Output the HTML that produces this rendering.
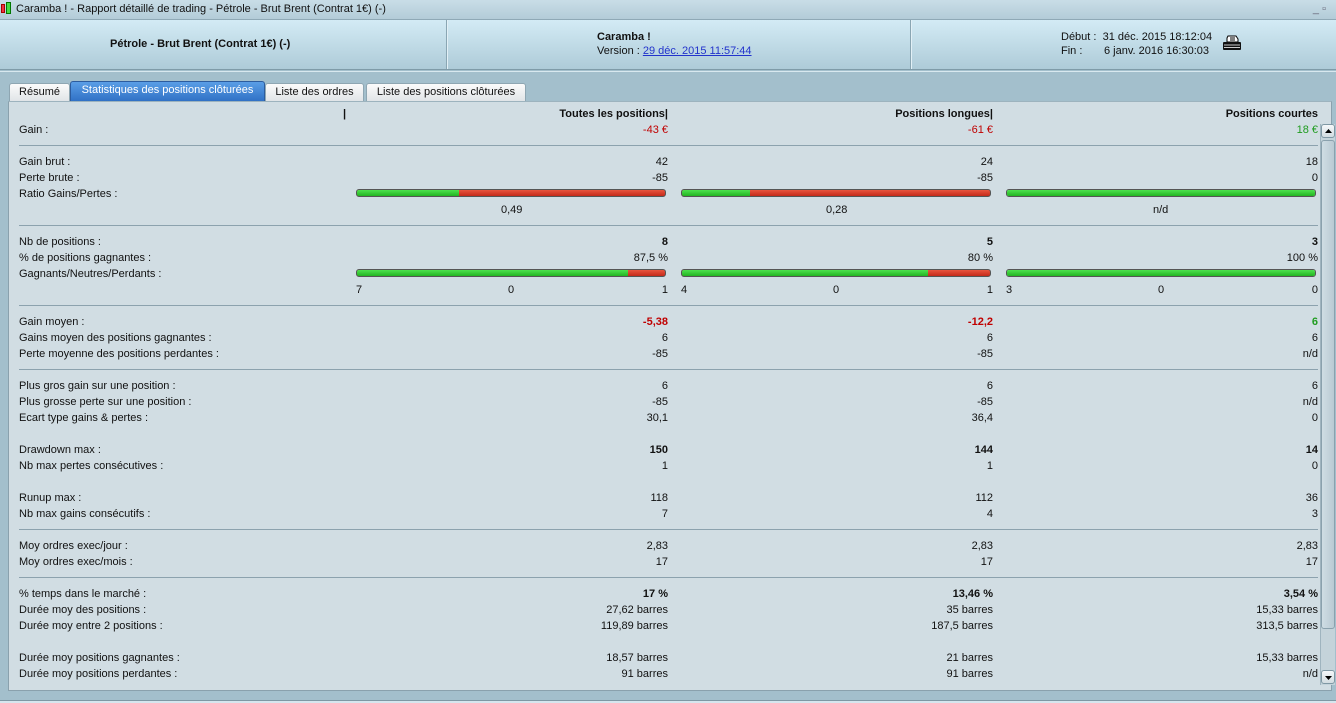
<!DOCTYPE html>
<html><head><meta charset="utf-8"><style>
*{margin:0;padding:0;box-sizing:border-box}
html{overflow:hidden;background:#a3bfcc}
body{width:1336px;height:703px;overflow:hidden;background:#a3bfcc;font-family:"Liberation Sans",Arial,sans-serif;font-size:11px;color:#111;position:relative}
.title{position:absolute;left:0;top:0;width:1336px;height:20px;background:linear-gradient(#c9dde7,#b3ccd8);border-bottom:1px solid #8fa9b6;font-size:11px;line-height:18px;padding-left:16px;color:#111}
.hdr{position:absolute;left:0;top:20px;width:1336px;height:50px;background:linear-gradient(#d3ebf5,#aecbd8);border-bottom:1px solid #7f9ba8}
.vs{position:absolute;top:0;width:1px;height:49px;background:#8aa6b3;box-shadow:1px 0 0 #e2f0f6}
.band{position:absolute;left:0;top:71px;width:1336px;height:1px;background:#d8e8ef}
.tab{position:absolute;top:83px;height:19px;border:1px solid #8ea6b2;border-bottom:none;border-radius:3px 3px 0 0;background:linear-gradient(#fbfbfb,#dfe3e6);line-height:17px;text-align:center;font-size:11px}
.tab.act{top:81px;height:21px;background:linear-gradient(#5a9ee6,#2e6fc4);color:#fff;border-color:#2c5c9e}
.panel{position:absolute;left:8px;top:101px;width:1324px;height:590px;background:#d1dde3;border:1px solid #8aa1ad;border-top-color:#9db3be}
.r{position:absolute;left:0;width:1336px;height:16px;line-height:16px;top:0}
.l{position:absolute;left:19px}
.v{position:absolute;text-align:right;width:200px}
.c1{left:468px}.c2{left:793px}.c3{left:1118px}
.b{font-weight:bold}
.red{color:#c00000}.grn{color:#1f9c1f}
.sep{position:absolute;left:19px;width:1299px;height:1px;background:#8ca2ae}
.bar{position:absolute;height:8px;border:1px solid #555;border-radius:3px;overflow:hidden;background:#d23a26;width:310px}
.bar i{display:block;height:100%;background:linear-gradient(#4ee24e,#22b422)}
.bar.rd{background:linear-gradient(#e8553e,#c42a1a)}
.sb{position:absolute;left:1320px;top:124px;width:15px;height:561px;background:#c4d3da;border-left:1px solid #9fb4bf;overflow:hidden}
.sbtn{position:absolute;left:0;width:14px;height:14px;border:1px solid #7f98a4;border-radius:3px;background:linear-gradient(#f5f8fa,#d2dce1)}
.thumb{position:absolute;left:0;top:16px;width:14px;height:489px;border:1px solid #8aa1ad;border-radius:3px;background:linear-gradient(90deg,#cfdde4,#b9cad3)}
</style></head><body>
<div class="title"><span style="position:absolute;left:1px;top:4px;width:4px;height:9px;background:#e34;border:1px solid #a00"></span><span style="position:absolute;left:6px;top:2px;width:5px;height:12px;background:#4d4;border:1px solid #070"></span>Caramba ! - Rapport détaillé de trading - Pétrole - Brut Brent (Contrat 1€) (-)<span style="position:absolute;right:10px;top:0;color:#667">_ ▫</span></div>
<div class="hdr">
<div class="vs" style="left:446px"></div><div class="vs" style="left:910px"></div>
<div class="b" style="position:absolute;left:110px;top:18px">Pétrole - Brut Brent (Contrat 1€) (-)</div>
<div class="b" style="position:absolute;left:597px;top:11px">Caramba !</div>
<div style="position:absolute;left:597px;top:25px">Version : <span style="color:#2233cc;text-decoration:underline">29 déc. 2015 11:57:44</span></div>
<div style="position:absolute;left:1061px;top:11px">Début :&nbsp; 31 déc. 2015 18:12:04</div>
<div style="position:absolute;left:1061px;top:25px">Fin :<span style="position:absolute;left:43px;white-space:nowrap">6 janv. 2016 16:30:03</span></div>
<svg style="position:absolute;left:1222px;top:15px" width="20" height="18" viewBox="0 0 20 18"><path d="M6 1h8l2 3v3H5V3z" fill="#fff" stroke="#000"/><path d="M2 7h16a1 1 0 0 1 1 1v6a1 1 0 0 1-1 1H2a1 1 0 0 1-1-1V8a1 1 0 0 1 1-1z" fill="#111"/><path d="M2 10h16M2 12.5h16" stroke="#ccc"/><path d="M8 3h5M8 5h5" stroke="#000"/></svg>
</div>
<div class="band"></div>
<div class="tab" style="left:9px;width:61px">Résumé</div>
<div class="tab act" style="left:70px;width:195px">Statistiques des positions clôturées</div>
<div class="tab" style="left:265px;width:99px">Liste des ordres</div>
<div class="tab" style="left:366px;width:160px">Liste des positions clôturées</div>
<div class="panel"></div>

<div class="r b" style="top:106px"><span style="position:absolute;left:343px">|</span><span class="v c1">Toutes les positions|</span><span class="v c2">Positions longues|</span><span class="v c3">Positions courtes</span></div>
<div class="r" style="top:122px"><span class="l">Gain :</span><span class="v c1 red">-43 €</span><span class="v c2 red">-61 €</span><span class="v c3 grn">18 €</span></div>
<div class="sep" style="top:145px"></div>
<div class="r" style="top:154px"><span class="l">Gain brut :</span><span class="v c1">42</span><span class="v c2">24</span><span class="v c3">18</span></div>
<div class="r" style="top:170px"><span class="l">Perte brute :</span><span class="v c1">-85</span><span class="v c2">-85</span><span class="v c3">0</span></div>
<div class="r" style="top:186px"><span class="l">Ratio Gains/Pertes :</span></div>
<div class="bar rd" style="left:356px;top:189px"><i style="width:33%"></i></div>
<div class="bar rd" style="left:681px;top:189px"><i style="width:22%"></i></div>
<div class="bar" style="left:1006px;top:189px"><i style="width:100%"></i></div>
<div class="r" style="top:202px"><span style="position:absolute;left:501px">0,49</span><span style="position:absolute;left:826px">0,28</span><span style="position:absolute;left:1153px">n/d</span></div>
<div class="sep" style="top:225px"></div>
<div class="r" style="top:234px"><span class="l">Nb de positions :</span><span class="v c1 b">8</span><span class="v c2 b">5</span><span class="v c3 b">3</span></div>
<div class="r" style="top:250px"><span class="l">% de positions gagnantes :</span><span class="v c1">87,5 %</span><span class="v c2">80 %</span><span class="v c3">100 %</span></div>
<div class="r" style="top:266px"><span class="l">Gagnants/Neutres/Perdants :</span></div>
<div class="bar rd" style="left:356px;top:269px"><i style="width:88%"></i></div>
<div class="bar rd" style="left:681px;top:269px"><i style="width:80%"></i></div>
<div class="bar" style="left:1006px;top:269px"><i style="width:100%"></i></div>
<div class="r" style="top:282px"><span style="position:absolute;left:356px">7</span><span style="position:absolute;left:508px">0</span><span class="v c1">1</span><span style="position:absolute;left:681px">4</span><span style="position:absolute;left:833px">0</span><span class="v c2">1</span><span style="position:absolute;left:1006px">3</span><span style="position:absolute;left:1158px">0</span><span class="v c3">0</span></div>
<div class="sep" style="top:305px"></div>
<div class="r" style="top:314px"><span class="l">Gain moyen :</span><span class="v c1 red b">-5,38</span><span class="v c2 red b">-12,2</span><span class="v c3 grn b">6</span></div>
<div class="r" style="top:330px"><span class="l">Gains moyen des positions gagnantes :</span><span class="v c1">6</span><span class="v c2">6</span><span class="v c3">6</span></div>
<div class="r" style="top:346px"><span class="l">Perte moyenne des positions perdantes :</span><span class="v c1">-85</span><span class="v c2">-85</span><span class="v c3">n/d</span></div>
<div class="sep" style="top:369px"></div>
<div class="r" style="top:378px"><span class="l">Plus gros gain sur une position :</span><span class="v c1">6</span><span class="v c2">6</span><span class="v c3">6</span></div>
<div class="r" style="top:394px"><span class="l">Plus grosse perte sur une position :</span><span class="v c1">-85</span><span class="v c2">-85</span><span class="v c3">n/d</span></div>
<div class="r" style="top:410px"><span class="l">Ecart type gains &amp; pertes :</span><span class="v c1">30,1</span><span class="v c2">36,4</span><span class="v c3">0</span></div>
<div class="r" style="top:442px"><span class="l">Drawdown max :</span><span class="v c1 b">150</span><span class="v c2 b">144</span><span class="v c3 b">14</span></div>
<div class="r" style="top:458px"><span class="l">Nb max pertes consécutives :</span><span class="v c1">1</span><span class="v c2">1</span><span class="v c3">0</span></div>
<div class="r" style="top:490px"><span class="l">Runup max :</span><span class="v c1">118</span><span class="v c2">112</span><span class="v c3">36</span></div>
<div class="r" style="top:506px"><span class="l">Nb max gains consécutifs :</span><span class="v c1">7</span><span class="v c2">4</span><span class="v c3">3</span></div>
<div class="sep" style="top:529px"></div>
<div class="r" style="top:538px"><span class="l">Moy ordres exec/jour :</span><span class="v c1">2,83</span><span class="v c2">2,83</span><span class="v c3">2,83</span></div>
<div class="r" style="top:554px"><span class="l">Moy ordres exec/mois :</span><span class="v c1">17</span><span class="v c2">17</span><span class="v c3">17</span></div>
<div class="sep" style="top:577px"></div>
<div class="r" style="top:586px"><span class="l">% temps dans le marché :</span><span class="v c1 b">17 %</span><span class="v c2 b">13,46 %</span><span class="v c3 b">3,54 %</span></div>
<div class="r" style="top:602px"><span class="l">Durée moy des positions :</span><span class="v c1">27,62 barres</span><span class="v c2">35 barres</span><span class="v c3">15,33 barres</span></div>
<div class="r" style="top:618px"><span class="l">Durée moy entre 2 positions :</span><span class="v c1">119,89 barres</span><span class="v c2">187,5 barres</span><span class="v c3">313,5 barres</span></div>
<div class="r" style="top:650px"><span class="l">Durée moy positions gagnantes :</span><span class="v c1">18,57 barres</span><span class="v c2">21 barres</span><span class="v c3">15,33 barres</span></div>
<div class="r" style="top:666px"><span class="l">Durée moy positions perdantes :</span><span class="v c1">91 barres</span><span class="v c2">91 barres</span><span class="v c3">n/d</span></div>

<div class="sb">
<div class="sbtn" style="top:0"><svg width="12" height="12" style="position:absolute;left:0;top:0"><path d="M3 8h7L6.5 4z" fill="#000"/></svg></div>
<div class="thumb"></div>
<div class="sbtn" style="top:546px"><svg width="12" height="12" style="position:absolute;left:0;top:0"><path d="M3 5h7L6.5 9z" fill="#000"/></svg></div>
</div>
<div style="position:absolute;left:0;top:700px;width:1336px;height:3px;background:#d6e6ee;border-top:1px solid #7f98a4"></div>
</body></html>
